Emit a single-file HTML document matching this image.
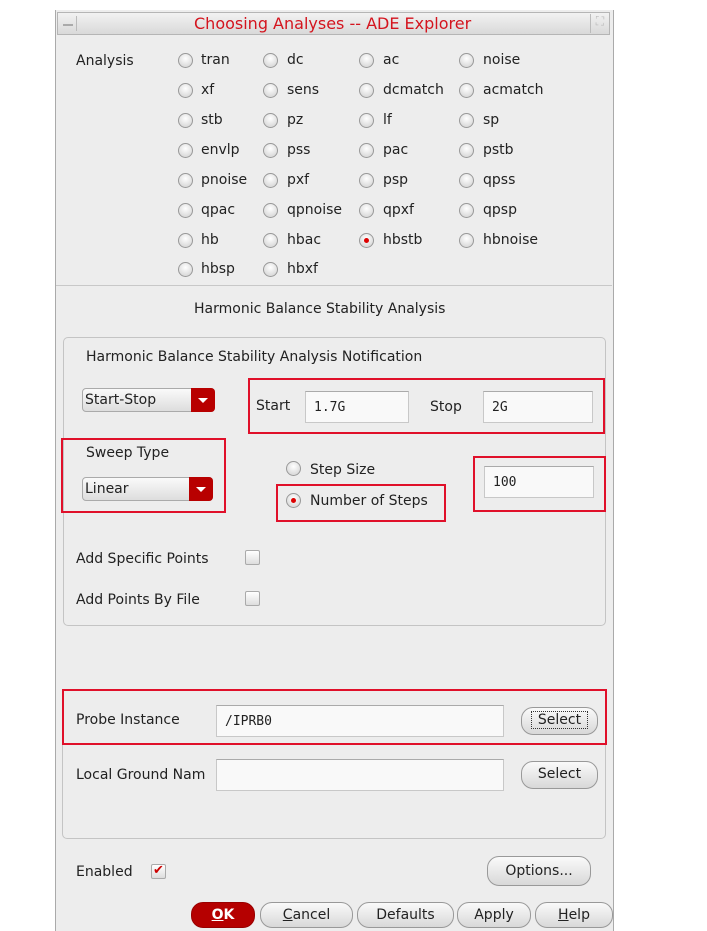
<!DOCTYPE html><html><head><style>
body{margin:0;width:707px;height:931px;background:#fff;position:relative;overflow:hidden;font-family:"DejaVu Sans","Liberation Sans",sans-serif;font-size:14px;color:#222}
.a{position:absolute;white-space:nowrap}
.win{position:absolute;left:55px;top:10px;width:557px;height:921px;background:#ededed;border-left:1px solid #aaa;border-right:1px solid #aaa}
.title{position:absolute;left:57px;top:12px;width:553px;height:23px;background:linear-gradient(#f2f2f2,#d9d9d9);border:1px solid #b5b5b5;box-sizing:border-box}
.r{position:absolute;width:15px;height:15px;border-radius:50%;background:radial-gradient(circle at 50% 35%,#fff,#ddd 70%);border:1px solid #999;box-sizing:border-box}
.r.on::after{content:"";position:absolute;left:4px;top:4px;width:5px;height:5px;border-radius:50%;background:#d00}
.frame{position:absolute;border:1px solid #c4c4c4;border-radius:5px}
.red{position:absolute;border:2px solid #e0102a;box-sizing:border-box}
.inp{position:absolute;background:#f9f9f9;border:1px solid #c8c8c8;border-top-color:#aaa;box-sizing:border-box;font-family:"DejaVu Sans Mono","Liberation Mono",monospace;font-size:13px;padding:8px 0 0 8px}
.dd{position:absolute;height:24px;border:1px solid #aaa;border-radius:4px;background:linear-gradient(#fafafa,#ddd);box-sizing:border-box;padding:3px 0 0 2px}
.dd i{position:absolute;right:-1px;top:-1px;width:24px;height:24px;background:#b80000;border-radius:0 4px 4px 0}
.dd i::after{content:"";position:absolute;left:7px;top:10px;border-left:5px solid transparent;border-right:5px solid transparent;border-top:5px solid #fff}
.btn{position:absolute;height:26px;border:1px solid #999;border-radius:12px;background:linear-gradient(#fafafa,#d8d8d8);box-sizing:border-box;text-align:center;padding-top:4px}
.cb{position:absolute;width:15px;height:15px;border:1px solid #aaa;background:linear-gradient(#fff,#ddd);box-sizing:border-box;border-radius:2px}
</style></head><body>
<div class="win"></div>
<div class="title"></div>
<div class="a" style="left:60px;top:16px;width:16px;height:15px;border-right:1px solid #bbb"><div style="position:absolute;left:3px;top:8px;width:10px;height:2px;background:#aaa"></div></div>
<div class="a" style="left:590px;top:14px;width:18px;height:19px;border-left:1px solid #bbb;color:#bbb;font-size:12px;text-align:center">⛶</div>
<div class="a" style="left:194px;top:14px;color:#d4141e;font-size:16px">Choosing Analyses -- ADE Explorer</div>
<div class="a" style="left:76px;top:53px">Analysis</div>

<div class="r" style="left:178px;top:53px"></div><div class="a" style="left:201px;top:52px">tran</div>
<div class="r" style="left:263px;top:53px"></div><div class="a" style="left:287px;top:52px">dc</div>
<div class="r" style="left:359px;top:53px"></div><div class="a" style="left:383px;top:52px">ac</div>
<div class="r" style="left:459px;top:53px"></div><div class="a" style="left:483px;top:52px">noise</div>

<div class="r" style="left:178px;top:83px"></div><div class="a" style="left:201px;top:82px">xf</div>
<div class="r" style="left:263px;top:83px"></div><div class="a" style="left:287px;top:82px">sens</div>
<div class="r" style="left:359px;top:83px"></div><div class="a" style="left:383px;top:82px">dcmatch</div>
<div class="r" style="left:459px;top:83px"></div><div class="a" style="left:483px;top:82px">acmatch</div>

<div class="r" style="left:178px;top:113px"></div><div class="a" style="left:201px;top:112px">stb</div>
<div class="r" style="left:263px;top:113px"></div><div class="a" style="left:287px;top:112px">pz</div>
<div class="r" style="left:359px;top:113px"></div><div class="a" style="left:383px;top:112px">lf</div>
<div class="r" style="left:459px;top:113px"></div><div class="a" style="left:483px;top:112px">sp</div>

<div class="r" style="left:178px;top:143px"></div><div class="a" style="left:201px;top:142px">envlp</div>
<div class="r" style="left:263px;top:143px"></div><div class="a" style="left:287px;top:142px">pss</div>
<div class="r" style="left:359px;top:143px"></div><div class="a" style="left:383px;top:142px">pac</div>
<div class="r" style="left:459px;top:143px"></div><div class="a" style="left:483px;top:142px">pstb</div>

<div class="r" style="left:178px;top:173px"></div><div class="a" style="left:201px;top:172px">pnoise</div>
<div class="r" style="left:263px;top:173px"></div><div class="a" style="left:287px;top:172px">pxf</div>
<div class="r" style="left:359px;top:173px"></div><div class="a" style="left:383px;top:172px">psp</div>
<div class="r" style="left:459px;top:173px"></div><div class="a" style="left:483px;top:172px">qpss</div>

<div class="r" style="left:178px;top:203px"></div><div class="a" style="left:201px;top:202px">qpac</div>
<div class="r" style="left:263px;top:203px"></div><div class="a" style="left:287px;top:202px">qpnoise</div>
<div class="r" style="left:359px;top:203px"></div><div class="a" style="left:383px;top:202px">qpxf</div>
<div class="r" style="left:459px;top:203px"></div><div class="a" style="left:483px;top:202px">qpsp</div>

<div class="r" style="left:178px;top:233px"></div><div class="a" style="left:201px;top:232px">hb</div>
<div class="r" style="left:263px;top:233px"></div><div class="a" style="left:287px;top:232px">hbac</div>
<div class="r on" style="left:359px;top:233px"></div><div class="a" style="left:383px;top:232px">hbstb</div>
<div class="r" style="left:459px;top:233px"></div><div class="a" style="left:483px;top:232px">hbnoise</div>

<div class="r" style="left:178px;top:262px"></div><div class="a" style="left:201px;top:261px">hbsp</div>
<div class="r" style="left:263px;top:262px"></div><div class="a" style="left:287px;top:261px">hbxf</div>

<div class="a" style="left:56px;top:285px;width:556px;height:1px;background:#c8c8c8"></div>
<div class="a" style="left:194px;top:301px">Harmonic Balance Stability Analysis</div>

<div class="frame" style="left:63px;top:337px;width:541px;height:287px"></div>
<div class="a" style="left:86px;top:349px">Harmonic Balance Stability Analysis Notification</div>
<div class="dd" style="left:82px;top:388px;width:133px">Start-Stop<i></i></div>
<div class="red" style="left:248px;top:378px;width:357px;height:56px"></div>
<div class="a" style="left:256px;top:398px">Start</div>
<div class="inp" style="left:305px;top:391px;width:104px;height:32px">1.7G</div>
<div class="a" style="left:430px;top:399px">Stop</div>
<div class="inp" style="left:483px;top:391px;width:110px;height:32px">2G</div>

<div class="red" style="left:61px;top:438px;width:165px;height:75px"></div>
<div class="a" style="left:86px;top:445px">Sweep Type</div>
<div class="dd" style="left:82px;top:477px;width:131px">Linear<i></i></div>
<div class="r" style="left:286px;top:461px"></div><div class="a" style="left:310px;top:462px">Step Size</div>
<div class="red" style="left:276px;top:484px;width:170px;height:38px"></div>
<div class="r on" style="left:286px;top:493px"></div><div class="a" style="left:310px;top:493px">Number of Steps</div>
<div class="red" style="left:473px;top:456px;width:133px;height:56px"></div>
<div class="inp" style="left:484px;top:466px;width:110px;height:32px">100</div>

<div class="a" style="left:76px;top:551px">Add Specific Points</div>
<div class="cb" style="left:245px;top:550px"></div>
<div class="a" style="left:76px;top:592px">Add Points By File</div>
<div class="cb" style="left:245px;top:591px"></div>

<div class="frame" style="left:62px;top:690px;width:542px;height:148px;border-top:none;border-radius:0 0 5px 5px"></div>
<div class="red" style="left:62px;top:689px;width:545px;height:56px;background:#ededed"></div>
<div class="a" style="left:76px;top:712px">Probe Instance</div>
<div class="inp" style="left:216px;top:705px;width:288px;height:32px">/IPRB0</div>
<div class="btn" style="left:521px;top:707px;width:77px;height:28px"><span style="border:1px dotted #333;padding:0 6px">Select</span></div>
<div class="a" style="left:76px;top:767px">Local Ground Nam</div>
<div class="inp" style="left:216px;top:759px;width:288px;height:32px"></div>
<div class="btn" style="left:521px;top:761px;width:77px;height:28px">Select</div>

<div class="a" style="left:76px;top:864px">Enabled</div>
<div class="cb" style="left:151px;top:864px;color:#c00;font-size:13px;line-height:12px;text-align:center;font-weight:bold">✔</div>
<div class="btn" style="left:487px;top:856px;width:104px;height:30px;padding-top:6px">Options...</div>

<div class="btn" style="left:191px;top:902px;width:64px;background:#b50000;border-color:#900;color:#fff;font-weight:bold"><u>O</u>K</div>
<div class="btn" style="left:260px;top:902px;width:93px"><u>C</u>ancel</div>
<div class="btn" style="left:357px;top:902px;width:97px">Defaults</div>
<div class="btn" style="left:457px;top:902px;width:74px">Apply</div>
<div class="btn" style="left:535px;top:902px;width:78px"><u>H</u>elp</div>
</body></html>
